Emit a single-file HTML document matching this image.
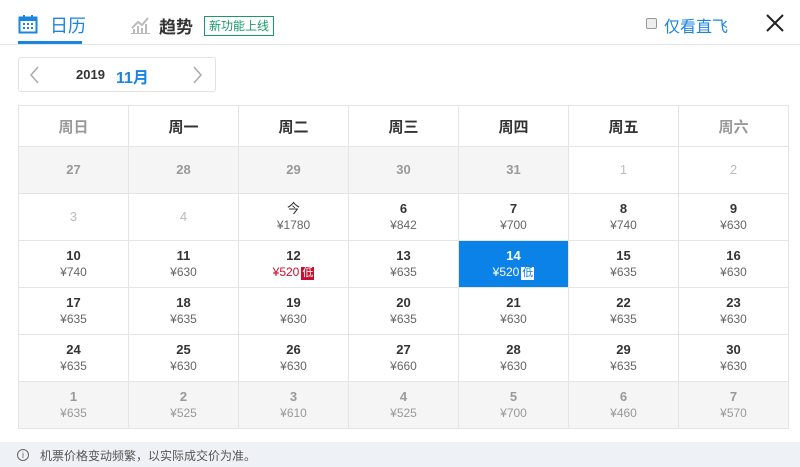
<!DOCTYPE html>
<html><head><meta charset="utf-8"><style>
*{margin:0;padding:0;box-sizing:border-box}
body{width:800px;height:467px;background:#fff;font-family:"Liberation Sans","Noto Sans CJK SC",sans-serif;position:relative;overflow:hidden;color:#333}
.a{position:absolute}
table{position:absolute;left:18px;top:105px;border-collapse:collapse;table-layout:fixed}
td{width:110px;border:1px solid #e5e5e5;text-align:center;height:47px;vertical-align:middle;font-size:12px;color:#666;line-height:16px}
th{width:110px;border:1px solid #e5e5e5;height:41px;font-size:15px;font-weight:bold;color:#333}
th.w{color:#999}
td b{display:block;font-size:13px;color:#333}
td.g{background:#f5f5f5;color:#999}
td.g b{color:#999}
td.e{color:#bbb}td.e b{color:#bbb;font-weight:normal}
td.sel{background:#0a82e8;color:#fff}td.sel b{color:#fff}
.low{display:inline-block;background:#c8102e;color:#fff;font-size:11px;line-height:13px;padding:0 1px;margin-left:2px}
.sel .low{background:#fff;color:#0a82e8}
.red{color:#c8102e}
</style></head><body>
<svg class="a" style="left:18px;top:14px" width="20" height="20" viewBox="0 0 20 20"><rect x="1.5" y="3.5" width="17" height="15" fill="none" stroke="#1a85e0" stroke-width="2"/><rect x="1" y="3" width="18" height="4" fill="#1a85e0"/><rect x="5" y="1" width="2" height="4" fill="#1a85e0"/><rect x="13" y="1" width="2" height="4" fill="#1a85e0"/><g fill="#1a85e0"><rect x="5" y="9" width="2" height="2"/><rect x="9" y="9" width="2" height="2"/><rect x="13" y="9" width="2" height="2"/><rect x="5" y="13" width="2" height="2"/><rect x="9" y="13" width="2" height="2"/><rect x="13" y="13" width="2" height="2"/></g></svg>
<div class="a" style="left:50px;top:12px;font-size:18px;color:#1a85e0">日历</div>
<div class="a" style="left:18px;top:41px;width:64px;height:3px;background:#1a85e0"></div>
<svg class="a" style="left:131px;top:16px" width="19" height="18" viewBox="0 0 19 18"><path d="M1 12 L7 6 L11 9 L17 2" fill="none" stroke="#bbb" stroke-width="2"/><rect x="2" y="13" width="2" height="4" fill="#bbb"/><rect x="6" y="10" width="2" height="7" fill="#bbb"/><rect x="10" y="12" width="2" height="5" fill="#bbb"/><rect x="14" y="8" width="2" height="9" fill="#bbb"/><rect x="0" y="17" width="19" height="1" fill="#bbb"/></svg>
<div class="a" style="left:159px;top:13px;font-size:17px;color:#333;font-weight:bold">趋势</div>
<div class="a" style="left:204px;top:16px;border:1px solid #1a9a6a;color:#1a9a6a;font-size:12px;padding:0 4px;height:20px;line-height:18px">新功能上线</div>
<div class="a" style="left:646px;top:18px;width:11px;height:11px;border:1px solid #999;border-radius:2px;background:#eee"></div>
<div class="a" style="left:664px;top:13px;font-size:16px;color:#1a85e0">仅看直飞</div>
<svg class="a" style="left:765px;top:13px" width="20" height="20"><path d="M2 2 L18 18 M18 2 L2 18" stroke="#222" stroke-width="2"/></svg>
<div class="a" style="left:0;top:44px;width:800px;height:1px;background:#e5e5e5"></div>
<div class="a" style="left:18px;top:57px;width:198px;height:35px;border:1px solid #e3e3e3;border-radius:3px"></div>
<svg class="a" style="left:28px;top:66px" width="12" height="18"><path d="M10 1 L3 9 L10 17" fill="none" stroke="#aaa" stroke-width="1.5"/></svg>
<svg class="a" style="left:192px;top:66px" width="12" height="18"><path d="M2 1 L9 9 L2 17" fill="none" stroke="#aaa" stroke-width="1.5"/></svg>
<div class="a" style="left:76px;top:67px;font-size:13px;font-weight:bold;color:#333">2019</div>
<div class="a" style="left:116px;top:64px;font-size:16px;font-weight:bold;color:#1a85e0">11月</div>
<table>
<tr><th class="w">周日</th><th>周一</th><th>周二</th><th>周三</th><th>周四</th><th>周五</th><th class="w">周六</th></tr>
<tr><td class="g"><b>27</b></td><td class="g"><b>28</b></td><td class="g"><b>29</b></td><td class="g"><b>30</b></td><td class="g"><b>31</b></td><td class="e"><b>1</b></td><td class="e"><b>2</b></td></tr>
<tr><td class="e"><b>3</b></td><td class="e"><b>4</b></td><td><b style="font-weight:normal">今</b>¥1780</td><td><b>6</b>¥842</td><td><b>7</b>¥700</td><td><b>8</b>¥740</td><td><b>9</b>¥630</td></tr>
<tr><td><b>10</b>¥740</td><td><b>11</b>¥630</td><td><b>12</b><span class="red">¥520</span><span class="low">低</span></td><td><b>13</b>¥635</td><td class="sel"><b>14</b>¥520<span class="low">低</span></td><td><b>15</b>¥635</td><td><b>16</b>¥630</td></tr>
<tr><td><b>17</b>¥635</td><td><b>18</b>¥635</td><td><b>19</b>¥630</td><td><b>20</b>¥635</td><td><b>21</b>¥630</td><td><b>22</b>¥635</td><td><b>23</b>¥630</td></tr>
<tr><td><b>24</b>¥635</td><td><b>25</b>¥630</td><td><b>26</b>¥630</td><td><b>27</b>¥660</td><td><b>28</b>¥630</td><td><b>29</b>¥635</td><td><b>30</b>¥630</td></tr>
<tr><td class="g"><b>1</b>¥635</td><td class="g"><b>2</b>¥525</td><td class="g"><b>3</b>¥610</td><td class="g"><b>4</b>¥525</td><td class="g"><b>5</b>¥700</td><td class="g"><b>6</b>¥460</td><td class="g"><b>7</b>¥570</td></tr>
</table>
<div class="a" style="left:0;top:442px;width:800px;height:25px;background:#eef1f5"></div>
<div class="a" style="left:17px;top:449px;width:12px;height:12px;border:1px solid #666;border-radius:50%;font-size:9px;line-height:10px;text-align:center;color:#666">i</div>
<div class="a" style="left:40px;top:447px;font-size:12px;color:#555">机票价格变动频繁，以实际成交价为准。</div>
</body></html>
